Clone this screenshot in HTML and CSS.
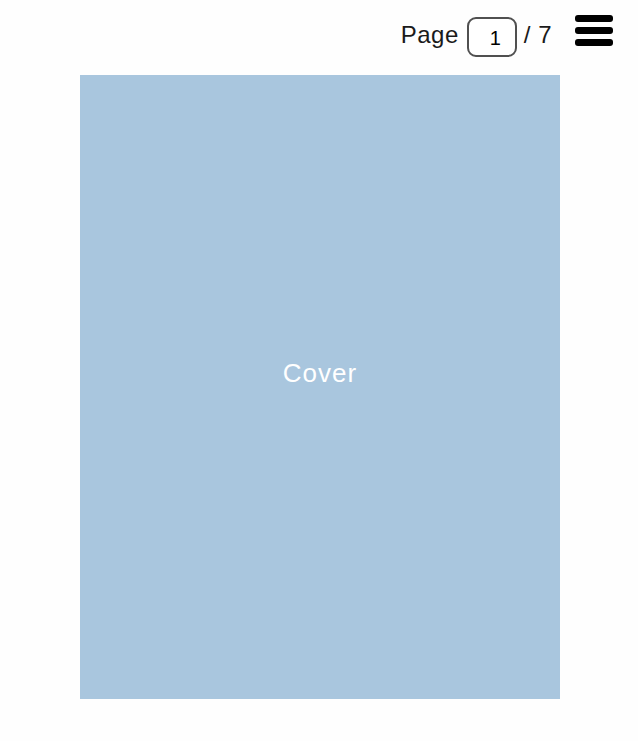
FILE: index.html
```html
<!DOCTYPE html>
<html>
<head>
<meta charset="utf-8">
<link rel="stylesheet" href="styles.css">
</head>
<body>
<header class="toolbar">
  <span class="label">Page</span>
  <input class="page-input" type="text" value="1">
  <span class="label total">/ 7</span>
  <button class="menu" aria-label="Menu">
    <span class="bar"></span>
    <span class="bar"></span>
    <span class="bar"></span>
  </button>
</header>
<main class="viewer">
  <div class="cover">Cover</div>
</main>
</body>
</html>
```
FILE: styles.css
```css
html, body {
  margin: 0;
  padding: 0;
  background: #fefefe;
  font-family: "Liberation Sans", Arial, sans-serif;
}
.toolbar {
  height: 75px;
  display: flex;
  align-items: flex-start;
  justify-content: flex-end;
  padding-right: 25px;
  box-sizing: border-box;
}
.label {
  font-size: 24px;
  color: #1a1a1a;
  line-height: 24px;
  margin-top: 23px;
  letter-spacing: 0.5px;
}
.page-input {
  width: 50px;
  height: 40px;
  box-sizing: border-box;
  margin: 17px 7px 0 8px;
  border: 2px solid #505050;
  border-radius: 9px;
  font-family: "Liberation Sans", Arial, sans-serif;
  font-size: 20px;
  text-align: right;
  padding: 3px 14px 0 0;
  color: #000;
  background: #fff;
  outline: none;
}
.total {
  margin-right: 23px;
}
.menu {
  margin-top: 15px;
  width: 38px;
  padding: 0;
  border: 0;
  background: none;
  display: flex;
  flex-direction: column;
  gap: 5px;
}
.bar {
  display: block;
  height: 7px;
  width: 38px;
  background: #000;
  border-radius: 3px;
}
.viewer {
  display: flex;
  justify-content: flex-start;
  padding-left: 80px;
}
.cover {
  width: 480px;
  height: 624px;
  box-sizing: border-box;
  padding-bottom: 28px;
  background: #a9c6de;
  color: #fff;
  font-size: 26px;
  letter-spacing: 1px;
  display: flex;
  align-items: center;
  justify-content: center;
}
```
